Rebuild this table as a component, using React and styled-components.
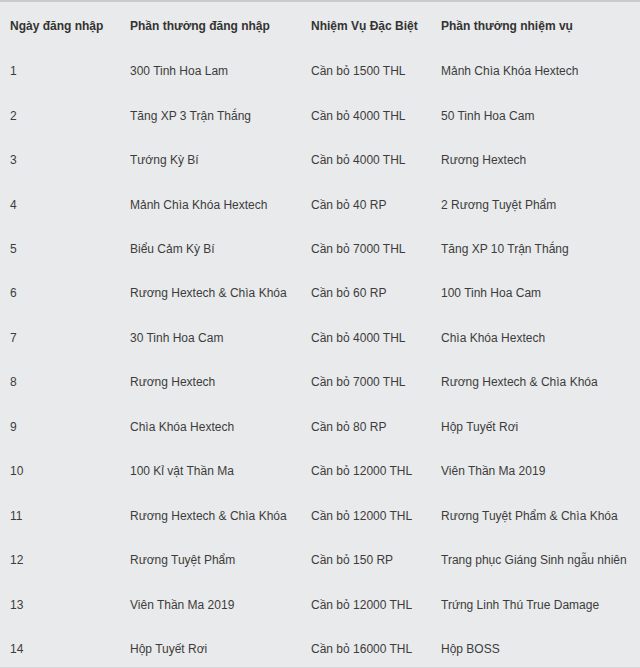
import React from 'react';
import styled, { createGlobalStyle } from 'styled-components';

const GlobalStyle = createGlobalStyle`
  html, body {
    margin: 0;
    padding: 0;
    background: #e9eaeb;
  }
`;

const rows = [
  ['1', '300 Tinh Hoa Lam', 'Cần bỏ 1500 THL', 'Mảnh Chìa Khóa Hextech'],
  ['2', 'Tăng XP 3 Trận Thắng', 'Cần bỏ 4000 THL', '50 Tinh Hoa Cam'],
  ['3', 'Tướng Kỳ Bí', 'Cần bỏ 4000 THL', 'Rương Hextech'],
  ['4', 'Mảnh Chìa Khóa Hextech', 'Cần bỏ 40 RP', '2 Rương Tuyệt Phẩm'],
  ['5', 'Biểu Cảm Kỳ Bí', 'Cần bỏ 7000 THL', 'Tăng XP 10 Trận Thắng'],
  ['6', 'Rương Hextech & Chìa Khóa', 'Cần bỏ 60 RP', '100 Tinh Hoa Cam'],
  ['7', '30 Tinh Hoa Cam', 'Cần bỏ 4000 THL', 'Chìa Khóa Hextech'],
  ['8', 'Rương Hextech', 'Cần bỏ 7000 THL', 'Rương Hextech & Chìa Khóa'],
  ['9', 'Chìa Khóa Hextech', 'Cần bỏ 80 RP', 'Hộp Tuyết Rơi'],
  ['10', '100 Kỉ vật Thần Ma', 'Cần bỏ 12000 THL', 'Viên Thần Ma 2019'],
  ['11', 'Rương Hextech & Chìa Khóa', 'Cần bỏ 12000 THL', 'Rương Tuyệt Phẩm & Chìa Khóa'],
  ['12', 'Rương Tuyệt Phẩm', 'Cần bỏ 150 RP', 'Trang phục Giáng Sinh ngẫu nhiên'],
  ['13', 'Viên Thần Ma 2019', 'Cần bỏ 12000 THL', 'Trứng Linh Thú True Damage'],
  ['14', 'Hộp Tuyết Rơi', 'Cần bỏ 16000 THL', 'Hộp BOSS'],
];

const headers = ['Ngày đăng nhập', 'Phần thưởng đăng nhập', 'Nhiệm Vụ Đặc Biệt', 'Phần thưởng nhiệm vụ'];

const App = () => {
  return (
    <>
      <GlobalStyle />
      <Table>
        <Row $head>
          {headers.map((h) => (
            <Cell key={h} $head>{h}</Cell>
          ))}
        </Row>
        {rows.map((r) => (
          <Row key={r[0]}>
            {r.map((c, i) => (
              <Cell key={i}>{c}</Cell>
            ))}
          </Row>
        ))}
      </Table>
    </>
  );
};

const Table = styled.div`
  width: 640px;
  height: 668px;
  box-sizing: border-box;
  padding-top: 1px;
  border-top: 2px solid #c9cacc;
  border-bottom: 1px solid #d6d7d9;
  background: #e9eaeb;
  font-family: "Liberation Sans", Arial, sans-serif;
  font-size: 12px;
  color: #3a3a3a;
  overflow: hidden;
`;

const Row = styled.div`
  display: grid;
  grid-template-columns: 120px 181px 130px 1fr;
  align-items: center;
  padding-left: 10px;
  height: ${(p) => (p.$head ? '46px' : '44.46px')};
`;

const Cell = styled.div`
  white-space: nowrap;
  font-weight: ${(p) => (p.$head ? 'bold' : 'normal')};
  color: ${(p) => (p.$head ? '#333' : '#3c3c3c')};
`;

export default App;
